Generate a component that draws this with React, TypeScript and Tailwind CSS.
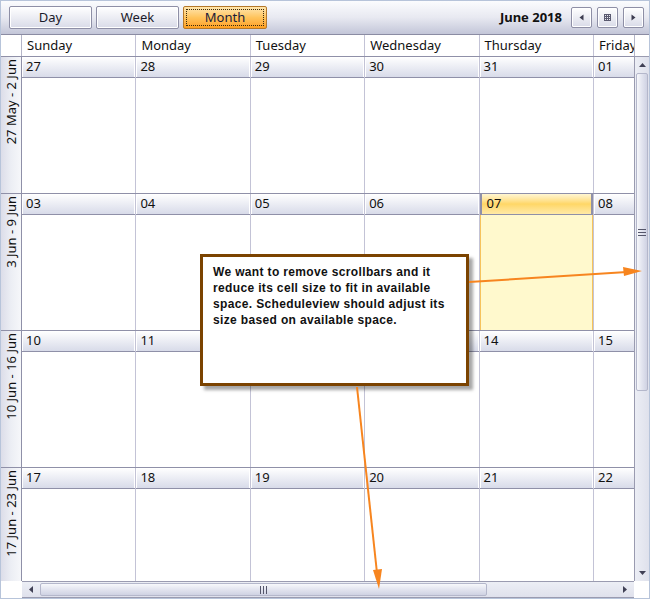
import React from 'react';

const DAYS = ['Sunday', 'Monday', 'Tuesday', 'Wednesday', 'Thursday', 'Friday', 'Saturday'];

const WEEKS = [
  { label: '27 May - 2 Jun', days: ['27', '28', '29', '30', '31', '01', '02'] },
  { label: '3 Jun - 9 Jun', days: ['03', '04', '05', '06', '07', '08', '09'] },
  { label: '10 Jun - 16 Jun', days: ['10', '11', '12', '13', '14', '15', '16'] },
  { label: '17 Jun - 23 Jun', days: ['17', '18', '19', '20', '21', '22', '23'] },
];

const TODAY = '07';

function ToolButton({ label, active }: { label: string; active?: boolean }) {
  if (active) {
    return (
      <div className="w-[84px] h-[23px] rounded-[2px] border border-[#b5782a] bg-gradient-to-b from-[#ffe6ad] via-[#ffc45c] to-[#ff9f1c] p-[2px]">
        <div className="h-full border border-dotted border-[#3a2a10] flex items-center justify-center text-[13px] text-[#1a1a3a]">
          {label}
        </div>
      </div>
    );
  }
  return (
    <div className="w-[83px] h-[23px] rounded-[2px] border border-[#8e8fa6] bg-gradient-to-b from-[#ffffff] to-[#d9dbe8] shadow-[inset_0_0_0_1px_#ffffff] flex items-center justify-center text-[13px] text-[#1a1a2a]">
      {label}
    </div>
  );
}

function NavButton({ children }: { children: React.ReactNode }) {
  return (
    <div className="w-[21px] h-[21px] rounded-[2px] border border-[#8e8fa6] bg-gradient-to-b from-[#ffffff] to-[#d9dbe8] shadow-[inset_0_0_0_1px_#ffffff] flex items-center justify-center">
      {children}
    </div>
  );
}

function Toolbar() {
  return (
    <div className="h-[35px] flex items-center pl-[8px] pr-[5px] bg-gradient-to-b from-[#fbfcfe] via-[#e8e9f1] to-[#c3c6d8] border-b border-[#8b8ca3]">
      <div className="flex gap-[4px]">
        <ToolButton label="Day" />
        <ToolButton label="Week" />
        <ToolButton label="Month" active />
      </div>
      <div className="flex-1" />
      <div className="text-[13px] font-bold text-[#111] mr-[9px]">June 2018</div>
      <div className="flex gap-[5px]">
        <NavButton>
          <svg width="5" height="7" viewBox="0 0 5 7"><path d="M4.5 0.5 L0.5 3.5 L4.5 6.5 Z" fill="#3c3c50" /></svg>
        </NavButton>
        <NavButton>
          <svg width="7" height="7" viewBox="0 0 7 7" fill="#3c3c50">
            <rect x="0" y="0" width="7" height="7" fill="#5a5a70" />
            <rect x="1" y="1" width="1" height="1" fill="#e8e9f0" /><rect x="3" y="1" width="1" height="1" fill="#e8e9f0" /><rect x="5" y="1" width="1" height="1" fill="#e8e9f0" />
            <rect x="1" y="3" width="1" height="1" fill="#e8e9f0" /><rect x="3" y="3" width="1" height="1" fill="#e8e9f0" /><rect x="5" y="3" width="1" height="1" fill="#e8e9f0" />
            <rect x="1" y="5" width="1" height="1" fill="#e8e9f0" /><rect x="3" y="5" width="1" height="1" fill="#e8e9f0" /><rect x="5" y="5" width="1" height="1" fill="#e8e9f0" />
          </svg>
        </NavButton>
        <NavButton>
          <svg width="5" height="7" viewBox="0 0 5 7"><path d="M0.5 0.5 L4.5 3.5 L0.5 6.5 Z" fill="#3c3c50" /></svg>
        </NavButton>
      </div>
    </div>
  );
}

function WeekRow({ week }: { week: (typeof WEEKS)[number] }) {
  return (
    <div className="h-[137px] flex shrink-0 border-t border-[#8f90a8]">
      {week.days.map((d) => {
        const today = d === TODAY;
        return (
          <div key={d} className="w-[114.4px] shrink-0 flex flex-col border-r border-[#c3c3d6]">
            <div
              className={
                today
                  ? 'h-[21px] shrink-0 pl-[5px] flex items-center text-[13px] text-[#111] border-b border-[#8f90a8] bg-gradient-to-b from-[#fff6d2] via-[#ffd766] to-[#ffeaa6] border-x-2 border-x-[#8f90a8]'
                  : 'h-[21px] shrink-0 pl-[4px] flex items-center text-[13px] text-[#111] border-b border-[#8f90a8] bg-gradient-to-b from-[#ffffff] to-[#d8dbe9] shadow-[inset_1px_1px_0_#ffffff,inset_-1px_0_0_#ffffff]'
              }
            >
              {d}
            </div>
            <div className={today ? 'flex-1 bg-[#fff9cd] border-x border-[#f6c35c]' : 'flex-1 bg-white'} />
          </div>
        );
      })}
    </div>
  );
}

function VScrollbar() {
  return (
    <div className="flex flex-col bg-gradient-to-r from-[#eceef5] to-[#dfe1ec] border-l border-[#9a9bb0] border-t border-[#9a9bb0]">
      <div className="h-[16px] shrink-0 flex items-center justify-center">
        <svg width="7" height="4" viewBox="0 0 7 4"><path d="M0 4 L3.5 0 L7 4 Z" fill="#404055" /></svg>
      </div>
      <div className="flex-1 px-[1px]">
        <div className="h-[318px] rounded-[2px] border border-[#b4b7cb] bg-gradient-to-r from-[#f7f8fb] via-[#e2e4ef] to-[#cfd2e3] flex items-center justify-center">
          <div className="flex flex-col gap-[2px]">
            <div className="w-[8px] h-[1px] bg-[#55566b]" />
            <div className="w-[8px] h-[1px] bg-[#55566b]" />
            <div className="w-[8px] h-[1px] bg-[#55566b]" />
          </div>
        </div>
      </div>
      <div className="h-[16px] shrink-0 flex items-center justify-center">
        <svg width="7" height="4" viewBox="0 0 7 4"><path d="M0 0 L3.5 4 L7 0 Z" fill="#404055" /></svg>
      </div>
    </div>
  );
}

function HScrollbar() {
  return (
    <div className="flex bg-gradient-to-b from-[#eceef5] to-[#dfe1ec] border-t border-[#9a9bb0] border-b border-[#9a9bb0]">
      <div className="w-[18px] shrink-0 flex items-center justify-center">
        <svg width="4" height="7" viewBox="0 0 4 7"><path d="M4 0 L0 3.5 L4 7 Z" fill="#404055" /></svg>
      </div>
      <div className="flex-1 py-[1px]">
        <div className="w-[447px] h-full rounded-[2px] border border-[#b4b7cb] bg-gradient-to-b from-[#f7f8fb] via-[#e2e4ef] to-[#cfd2e3] flex items-center justify-center">
          <div className="flex gap-[2px]">
            <div className="w-[1px] h-[8px] bg-[#55566b]" />
            <div className="w-[1px] h-[8px] bg-[#55566b]" />
            <div className="w-[1px] h-[8px] bg-[#55566b]" />
          </div>
        </div>
      </div>
      <div className="w-[18px] shrink-0 flex items-center justify-center">
        <svg width="4" height="7" viewBox="0 0 4 7"><path d="M0 0 L4 3.5 L0 7 Z" fill="#404055" /></svg>
      </div>
    </div>
  );
}

export default function App() {
  return (
    <div className="relative w-[650px] h-[599px] overflow-hidden bg-white flex flex-col font-['Noto_Sans',sans-serif] border border-[#b7c4da]">
      <Toolbar />

      <div className="grid grid-cols-[21px_612px_15px] grid-rows-[21px_525px_17px]">
        {/* header corner */}
        <div className="bg-white border-r border-[#b4b5c8]" />

        {/* day names */}
        <div className="overflow-hidden flex bg-white">
          {DAYS.map((d) => (
            <div key={d} className="w-[114.4px] shrink-0 pl-[5px] flex items-center text-[13px] text-[#111] border-r border-[#c3c3d6]">
              {d}
            </div>
          ))}
        </div>

        {/* header right corner */}
        <div className="bg-white border-l border-[#b4b5c8]" />

        {/* week gutter */}
        <div className="overflow-hidden flex flex-col">
          {WEEKS.map((w) => (
            <div
              key={w.label}
              className="h-[137px] shrink-0 flex flex-col items-center pt-[2px] border-t border-r border-[#8f90a8] bg-gradient-to-r from-[#dcdde9] via-[#eceef4] to-[#f6f7fa]"
            >
              <span className="[writing-mode:vertical-rl] rotate-180 text-[13px] text-[#111] whitespace-nowrap leading-[20px]">
                {w.label}
              </span>
            </div>
          ))}
        </div>

        {/* weeks */}
        <div className="overflow-hidden flex flex-col">
          {WEEKS.map((w) => (
            <WeekRow key={w.label} week={w} />
          ))}
        </div>

        <VScrollbar />

        {/* bottom left corner */}
        <div className="bg-white" />

        <HScrollbar />

        {/* bottom right corner */}
        <div className="bg-white" />
      </div>

      {/* callout note */}
      <div className="absolute left-[199px] top-[253px] w-[269px] h-[132px] bg-white border-[3px] border-[#7b4300] shadow-[4px_4px_3px_rgba(0,0,0,0.35)] pl-[10px] pt-[7px] pr-[6px] font-['Liberation_Sans',Arial,sans-serif] font-bold text-[12px] leading-[16px] tracking-[0.35px] text-[#111]">
        We want to remove scrollbars and it reduce its cell size to fit in available space. Scheduleview should adjust its size based on available space.
      </div>

      {/* arrows */}
      <svg className="absolute inset-0 pointer-events-none" width="650" height="599" viewBox="0 0 650 599">
        <line x1="468" y1="281" x2="626" y2="271" stroke="#f7851f" strokeWidth="2" />
        <path d="M641 270 L622 266 L623 275 Z" fill="#f7851f" />
        <line x1="356" y1="386" x2="376" y2="572" stroke="#f7851f" strokeWidth="2" />
        <path d="M378 588 L372 569 L381 568 Z" fill="#f7851f" />
      </svg>
    </div>
  );
}
